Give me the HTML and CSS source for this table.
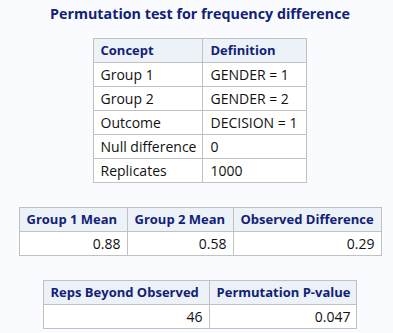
FILE: index.html
```html
<!DOCTYPE html>
<html>
<head>
<meta charset="utf-8">
<link rel="stylesheet" href="styles.css">
</head>
<body>
<div class="page">
  <h1 class="title">Permutation test for frequency difference</h1>
  <table class="tbl">
    <colgroup><col class="w107"><col class="w104"></colgroup>
    <thead>
      <tr><th>Concept</th><th>Definition</th></tr>
    </thead>
    <tbody>
      <tr><td>Group 1</td><td>GENDER = 1</td></tr>
      <tr><td>Group 2</td><td>GENDER = 2</td></tr>
      <tr><td>Outcome</td><td>DECISION = 1</td></tr>
      <tr><td>Null difference</td><td>0</td></tr>
      <tr><td>Replicates</td><td>1000</td></tr>
    </tbody>
  </table>
  <table class="tbl num">
    <colgroup><col class="w108"><col class="w106"><col class="w148"></colgroup>
    <thead>
      <tr><th>Group 1 Mean</th><th>Group 2 Mean</th><th>Observed Difference</th></tr>
    </thead>
    <tbody>
      <tr><td>0.88</td><td>0.58</td><td>0.29</td></tr>
    </tbody>
  </table>
  <table class="tbl num">
    <colgroup><col class="w166"><col class="w143"></colgroup>
    <thead>
      <tr><th>Reps Beyond Observed</th><th>Permutation P-value</th></tr>
    </thead>
    <tbody>
      <tr><td>46</td><td>0.047</td></tr>
    </tbody>
  </table>
</div>
</body>
</html>
```

FILE: styles.css
```css
html, body {
  margin: 0;
  padding: 0;
  background: #fafbfe;
}
body {
  font-family: "Open Sans", "Liberation Sans", sans-serif;
  font-size: 14px;
  color: #111;
}
.page {
  display: flex;
  flex-direction: column;
  align-items: center;
  padding: 4px 0 0 7px;
  gap: 24px;
}
.title {
  margin: 0 0 -10px 0;
  font-size: 14.3px;
  font-weight: bold;
  color: #112277;
  line-height: 20px;
}
.tbl {
  border-collapse: collapse;
  table-layout: fixed;
  background: #fff;
  border: 1px solid #c1c1c1;
}
.w107 { width: 107px; }
.w104 { width: 104px; }
.w108 { width: 108px; }
.w106 { width: 106px; }
.w148 { width: 148px; }
.w166 { width: 166px; }
.w143 { width: 143px; }
.tbl th, .tbl td {
  border: 1px solid #c1c1c1;
  padding: 3px 6px 3px 7px;
  line-height: 17px;
  text-align: left;
  white-space: nowrap;
  overflow: hidden;
}
.tbl th {
  background: #edf2f9;
  color: #112277;
  font-weight: bold;
  font-size: 13px;
}
.num td {
  text-align: right;
}
```
